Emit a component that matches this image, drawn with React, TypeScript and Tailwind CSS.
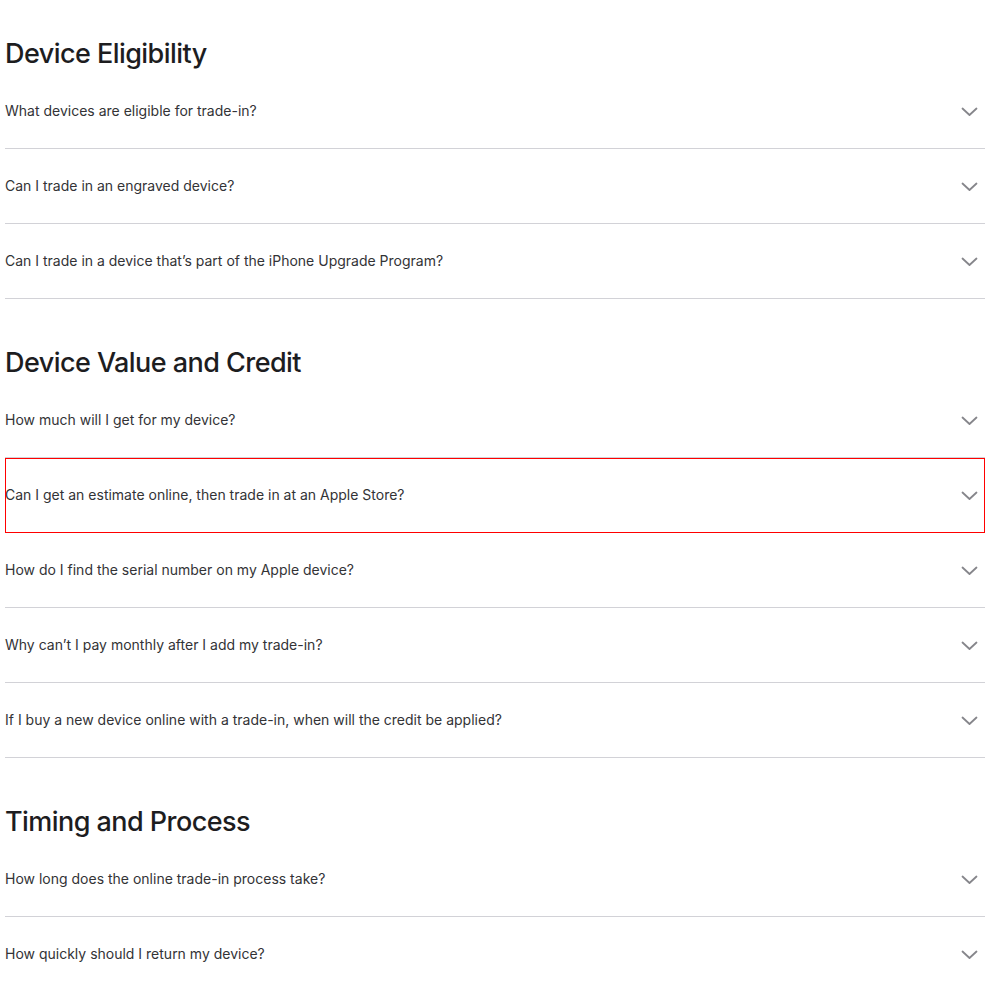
import React from "react";

const sections = [
  {
    title: "Device Eligibility",
    items: [
      "What devices are eligible for trade-in?",
      "Can I trade in an engraved device?",
      "Can I trade in a device that’s part of the iPhone Upgrade Program?",
    ],
  },
  {
    title: "Device Value and Credit",
    items: [
      "How much will I get for my device?",
      "Can I get an estimate online, then trade in at an Apple Store?",
      "How do I find the serial number on my Apple device?",
      "Why can’t I pay monthly after I add my trade-in?",
      "If I buy a new device online with a trade-in, when will the credit be applied?",
    ],
  },
  {
    title: "Timing and Process",
    items: [
      "How long does the online trade-in process take?",
      "How quickly should I return my device?",
    ],
  },
];

function Chevron() {
  return (
    <svg width="17" height="10" viewBox="0 0 17 10" fill="none" className="shrink-0 mt-[1px]">
      <path d="M1.5 1.5 L8.5 8 L15.5 1.5" stroke="#86868b" strokeWidth="1.8" strokeLinecap="round" strokeLinejoin="round" />
    </svg>
  );
}

export default function App() {
  return (
    <div className="min-h-screen bg-white pl-[5px] pt-[37px] text-[#333336]" style={{ fontFamily: "Inter, 'Noto Sans', sans-serif" }}>
      <div className="w-[980px]">
        {sections.map((s, si) => (
          <section key={s.title} className={si > 0 ? "mt-[47px]" : ""}>
            <h2 className="text-[27px] leading-[34px] font-medium tracking-[-0.55px] text-[#1d1d1f] mb-[3px]">
              {s.title}
            </h2>
            <ul>
              {s.items.map((q) => {
                const active = q.startsWith("Can I get an estimate");
                return (
                  <li
                    key={q}
                    className={
                      "flex h-[75px] items-center justify-between border-b border-[#d2d2d7] pr-[7px] " +
                      (active ? "outline outline-1 -outline-offset-1 outline-[#ff0000]" : "")
                    }
                  >
                    <span className="text-[14px] leading-5">{q}</span>
                    <Chevron />
                  </li>
                );
              })}
            </ul>
          </section>
        ))}
      </div>
    </div>
  );
}
